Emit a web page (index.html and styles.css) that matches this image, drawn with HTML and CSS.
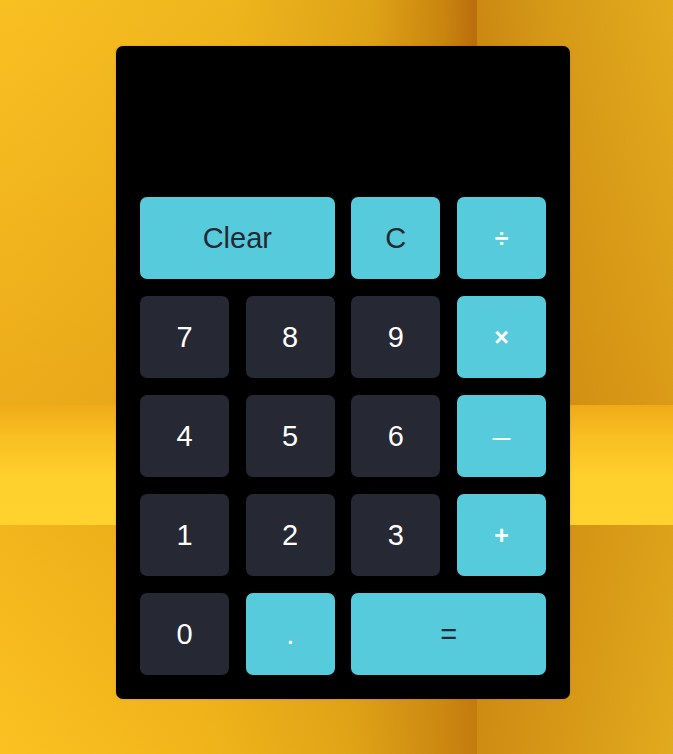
FILE: index.html
```html
<!DOCTYPE html>
<html lang="en">
<head>
<meta charset="utf-8">
<title>Calculator</title>
<link rel="stylesheet" href="styles.css">
</head>
<body>
<main class="scene">
  <div class="calculator">
    <div class="display"></div>
    <div class="keys">
      <button class="key key-accent key-wide">Clear</button>
      <button class="key key-accent">C</button>
      <button class="key key-accent key-light key-op">÷</button>
      <button class="key">7</button>
      <button class="key">8</button>
      <button class="key">9</button>
      <button class="key key-accent key-light key-op">×</button>
      <button class="key">4</button>
      <button class="key">5</button>
      <button class="key">6</button>
      <button class="key key-accent key-light key-minus">–</button>
      <button class="key">1</button>
      <button class="key">2</button>
      <button class="key">3</button>
      <button class="key key-accent key-light key-op">+</button>
      <button class="key">0</button>
      <button class="key key-accent key-light">.</button>
      <button class="key key-accent key-wide">=</button>
    </div>
  </div>
</main>
</body>
</html>
```

FILE: styles.css
```css
* { box-sizing: border-box; }

html, body {
  margin: 0;
  padding: 0;
}

body {
  width: 673px;
  height: 754px;
  overflow: hidden;
  font-family: "Liberation Sans", Arial, sans-serif;
  background-color: #f0b41c;
  background-image:
    /* wall shading (top band) */
    linear-gradient(180deg, rgba(255, 210, 60, 0.0) 0%, rgba(190, 100, 0, 0.22) 100%),
    linear-gradient(90deg, #f9c022 0%, #eeb51d 35%, #dfa317 55%, #c9850f 66%, #b96d0c 70.8%, #cb8913 70.9%, #d69a17 82%, #e3ab1e 100%),
    /* floor strip */
    linear-gradient(180deg, #eeac18 0%, #f8be22 25%, #ffd02c 60%, #ffd22e 100%),
    /* floor bottom */
    linear-gradient(180deg, rgba(190, 110, 0, 0.14) 0%, rgba(255, 220, 60, 0.0) 100%),
    linear-gradient(90deg, #fbc121 0%, #f1b51b 30%, #e0a417 52%, #cd8a12 65%, #c37b0e 70.8%, #cf8c13 70.9%, #d89a17 85%, #e2aa1e 100%);
  background-size:
    100% 405px,
    100% 405px,
    100% 120px,
    100% 229px,
    100% 229px;
  background-position:
    0 0,
    0 0,
    0 405px,
    0 525px,
    0 525px;
  background-repeat: no-repeat;
}

.scene {
  padding-top: 46px;
  padding-left: 116px;
}

.calculator {
  width: 454px;
  height: 653px;
  background: #000;
  border-radius: 7px;
  padding: 24px;
  box-shadow: 0 0 2px rgba(120, 70, 0, 0.35);
}

.display {
  height: 127px;
}

.keys {
  display: grid;
  grid-template-columns: repeat(4, 1fr);
  grid-auto-rows: 82px;
  column-gap: 16.67px;
  row-gap: 17px;
}

.key {
  border: none;
  margin: 0;
  padding: 0;
  border-radius: 7px;
  background: #262833;
  color: #ffffff;
  font-family: "Liberation Sans", Arial, sans-serif;
  font-size: 29px;
  display: flex;
  align-items: center;
  justify-content: center;
}

.key-accent {
  background: #56cbdb;
  color: #262833;
}

.key-light {
  color: #ffffff;
}

.key-op {
  font-size: 25px;
  font-weight: bold;
}

.key-minus {
  font-size: 32px;
}

.key-wide {
  grid-column: span 2;
}
```
